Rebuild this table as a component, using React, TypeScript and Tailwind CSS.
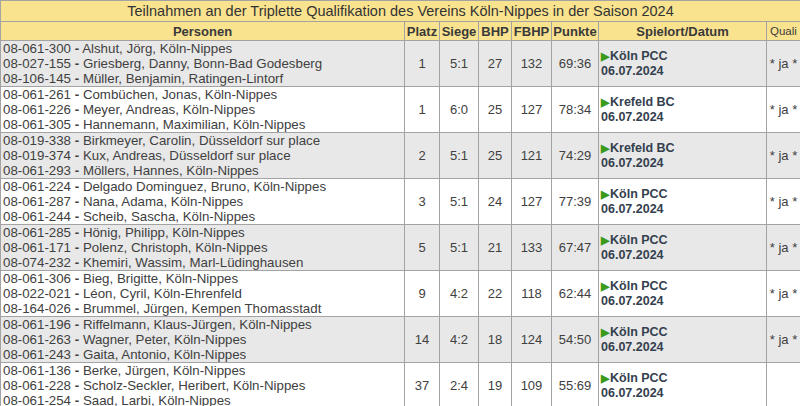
type Row = {
  persons: string[];
  platz: string;
  siege: string;
  bhp: string;
  fbhp: string;
  punkte: string;
  ort: string;
  quali: string;
};

const rows: Row[] = [
  {
    persons: [
      "08-061-300 - Alshut, Jörg, Köln-Nippes",
      "08-027-155 - Griesberg, Danny, Bonn-Bad Godesberg",
      "08-106-145 - Müller, Benjamin, Ratingen-Lintorf",
    ],
    platz: "1",
    siege: "5:1",
    bhp: "27",
    fbhp: "132",
    punkte: "69:36",
    ort: "Köln PCC",
    quali: "* ja *",
  },
  {
    persons: [
      "08-061-261 - Combüchen, Jonas, Köln-Nippes",
      "08-061-226 - Meyer, Andreas, Köln-Nippes",
      "08-061-305 - Hannemann, Maximilian, Köln-Nippes",
    ],
    platz: "1",
    siege: "6:0",
    bhp: "25",
    fbhp: "127",
    punkte: "78:34",
    ort: "Krefeld BC",
    quali: "* ja *",
  },
  {
    persons: [
      "08-019-338 - Birkmeyer, Carolin, Düsseldorf sur place",
      "08-019-374 - Kux, Andreas, Düsseldorf sur place",
      "08-061-293 - Möllers, Hannes, Köln-Nippes",
    ],
    platz: "2",
    siege: "5:1",
    bhp: "25",
    fbhp: "121",
    punkte: "74:29",
    ort: "Krefeld BC",
    quali: "* ja *",
  },
  {
    persons: [
      "08-061-224 - Delgado Dominguez, Bruno, Köln-Nippes",
      "08-061-287 - Nana, Adama, Köln-Nippes",
      "08-061-244 - Scheib, Sascha, Köln-Nippes",
    ],
    platz: "3",
    siege: "5:1",
    bhp: "24",
    fbhp: "127",
    punkte: "77:39",
    ort: "Köln PCC",
    quali: "* ja *",
  },
  {
    persons: [
      "08-061-285 - Hönig, Philipp, Köln-Nippes",
      "08-061-171 - Polenz, Christoph, Köln-Nippes",
      "08-074-232 - Khemiri, Wassim, Marl-Lüdinghausen",
    ],
    platz: "5",
    siege: "5:1",
    bhp: "21",
    fbhp: "133",
    punkte: "67:47",
    ort: "Köln PCC",
    quali: "* ja *",
  },
  {
    persons: [
      "08-061-306 - Bieg, Brigitte, Köln-Nippes",
      "08-022-021 - Léon, Cyril, Köln-Ehrenfeld",
      "08-164-026 - Brummel, Jürgen, Kempen Thomasstadt",
    ],
    platz: "9",
    siege: "4:2",
    bhp: "22",
    fbhp: "118",
    punkte: "62:44",
    ort: "Köln PCC",
    quali: "* ja *",
  },
  {
    persons: [
      "08-061-196 - Riffelmann, Klaus-Jürgen, Köln-Nippes",
      "08-061-263 - Wagner, Peter, Köln-Nippes",
      "08-061-243 - Gaita, Antonio, Köln-Nippes",
    ],
    platz: "14",
    siege: "4:2",
    bhp: "18",
    fbhp: "124",
    punkte: "54:50",
    ort: "Köln PCC",
    quali: "* ja *",
  },
  {
    persons: [
      "08-061-136 - Berke, Jürgen, Köln-Nippes",
      "08-061-228 - Scholz-Seckler, Heribert, Köln-Nippes",
      "08-061-254 - Saad, Larbi, Köln-Nippes",
    ],
    platz: "37",
    siege: "2:4",
    bhp: "19",
    fbhp: "109",
    punkte: "55:69",
    ort: "Köln PCC",
    quali: "",
  },
];

const th = "border border-[#a3a3a3] font-bold text-center h-[19px] p-0";
const td = "border border-[#a3a3a3] text-center p-0";

export default function App() {
  return (
    <div className="w-[800px] h-[406px] overflow-hidden bg-white font-['Liberation_Sans',Arial,sans-serif] text-[13px] leading-[15px] text-[#404040]">
      <table className="w-[800px] table-fixed border-collapse">
        <colgroup>
          <col className="w-[404px]" />
          <col className="w-[35px]" />
          <col className="w-[39px]" />
          <col className="w-[33px]" />
          <col className="w-[40px]" />
          <col className="w-[47px]" />
          <col className="w-[168px]" />
          <col className="w-[34px]" />
        </colgroup>
        <thead>
          <tr className="bg-[#fae38f]">
            <th
              colSpan={8}
              className="border border-[#a3a3a3] h-[21px] p-0 text-[14.5px] leading-[20px] font-normal text-[#333]"
            >
              Teilnahmen an der Triplette Qualifikation des Vereins Köln-Nippes in der Saison 2024
            </th>
          </tr>
          <tr className="bg-[#fae38f] text-[#3a3a3a]">
            <th className={th}>Personen</th>
            <th className={th}>Platz</th>
            <th className={th}>Siege</th>
            <th className={th}>BHP</th>
            <th className={th}>FBHP</th>
            <th className={th}>Punkte</th>
            <th className={th}>Spielort/Datum</th>
            <th className="border border-[#a3a3a3] font-normal text-[11.5px] text-left pl-[3px] pr-0 py-0 whitespace-nowrap overflow-visible">
              Quali
            </th>
          </tr>
        </thead>
        <tbody>
          {rows.map((r, i) => (
            <tr key={i} className={i % 2 === 0 ? "bg-[#e8e8e8]" : "bg-white"}>
              <td className="border border-[#a3a3a3] h-[46px] pl-[2px] pr-0 py-0 text-left whitespace-nowrap text-[13.3px]">
                {r.persons.map((p) => {
                  const [num, ...rest] = p.split(" - ");
                  return (
                    <div key={p}>
                      {num} <b>-</b> {rest.join(" - ")}
                    </div>
                  );
                })}
              </td>
              <td className={td}>{r.platz}</td>
              <td className={td}>{r.siege}</td>
              <td className={td}>{r.bhp}</td>
              <td className={td}>{r.fbhp}</td>
              <td className={td}>{r.punkte}</td>
              <td className="border border-[#a3a3a3] pl-[2px] p-0 text-left font-bold text-[#34404e] text-[12.5px] leading-[15px]">
                <div className="flex items-center">
                  <span className="text-[#3a9a1c] text-[11px] leading-[15px] mr-[1px]">▶</span>
                  <span>{r.ort}</span>
                </div>
                <div>06.07.2024</div>
              </td>
              <td className="border border-[#a3a3a3] text-center p-0 whitespace-nowrap">{r.quali}</td>
            </tr>
          ))}
        </tbody>
      </table>
    </div>
  );
}
